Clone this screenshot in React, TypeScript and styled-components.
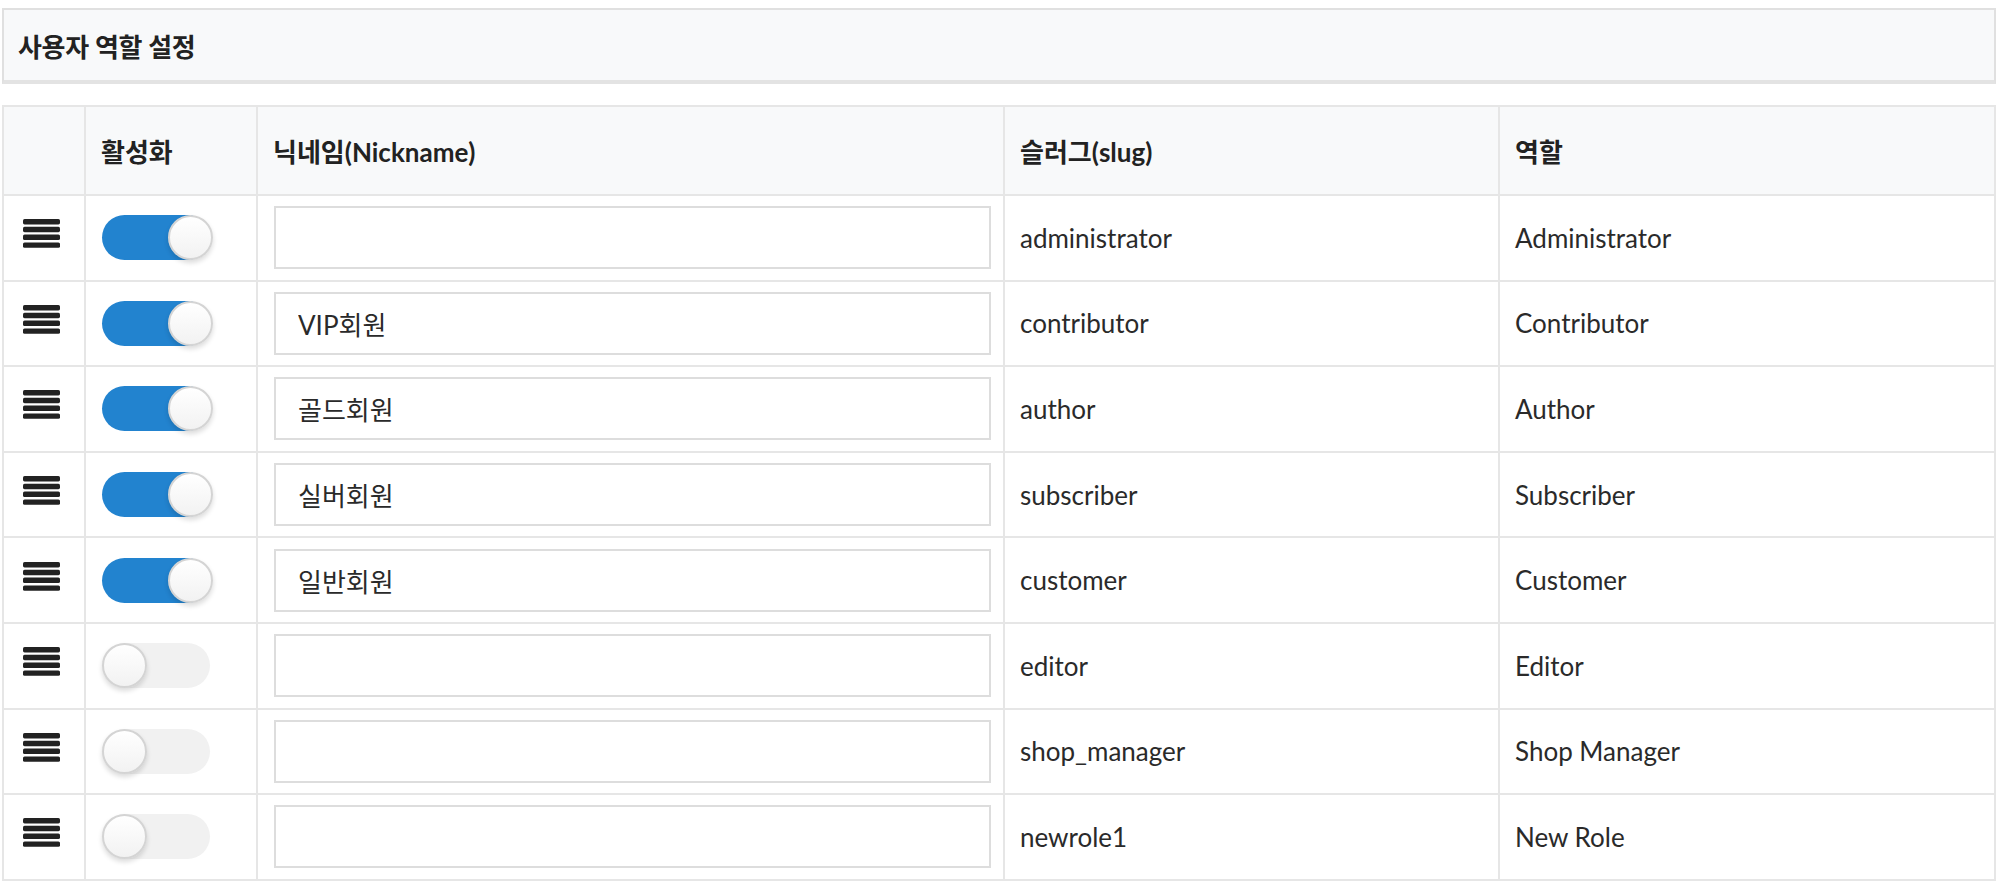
import React from "react";
import styled, { createGlobalStyle } from "styled-components";

const GlobalStyle = createGlobalStyle`
  html, body {
    margin: 0;
    padding: 0;
    background: #ffffff;
  }
  body {
    font-family: Lato, "Noto Sans CJK KR", "Noto Sans", sans-serif;
    color: #2a2a2a;
  }
  * { box-sizing: border-box; }
`;

const Page = styled.div`
  padding: 8px 8px 0 2px;
  width: 2004px;
`;

const TitleBox = styled.div`
  height: 76px;
  display: flex;
  align-items: center;
  padding: 0 14px;
  background: #f8f9fa;
  border: 2px solid #e0e0e0;
  border-bottom-width: 4px;
  border-bottom-color: #e3e3e3;
`;

const Title = styled.h2`
  margin: 0;
  font-size: 26px;
  font-weight: 700;
  color: #222;
  letter-spacing: -0.3px;
`;

const Table = styled.table`
  margin-top: 21px;
  width: 100%;
  border-collapse: collapse;
  table-layout: fixed;
  border: 2px solid #e0e0e0;
`;

const HeadCell = styled.th`
  height: 89px;
  padding: 0 15px;
  text-align: left;
  font-size: 26px;
  font-weight: 700;
  color: #222;
  background: #f8f9fa;
  border: 2px solid #e6e6e6;
  vertical-align: middle;
`;

const Cell = styled.td<{ $pad?: string }>`
  height: 85.6px;
  padding: ${(p) => p.$pad ?? "0 15px"};
  font-size: 26px;
  color: #2a2a2a;
  border: 2px solid #e6e6e6;
  vertical-align: middle;
`;

const Handle = styled.svg`
  display: block;
  width: 37px;
  height: 30px;
  margin-bottom: 7px;
`;

const Track = styled.div<{ $on: boolean }>`
  position: relative;
  width: 108px;
  height: 45px;
  border-radius: 23px;
  background: ${(p) => (p.$on ? "#2283cf" : "#f1f1f1")};
`;

const Knob = styled.div<{ $on: boolean }>`
  position: absolute;
  top: 0;
  left: ${(p) => (p.$on ? "66px" : "0px")};
  width: 45px;
  height: 45px;
  border-radius: 50%;
  background: linear-gradient(#ffffff, #f2f2f2);
  border: 2px solid #d4d4d4;
  box-shadow: 0 3px 5px rgba(0, 0, 0, 0.14);
`;

const NickInput = styled.input`
  display: block;
  width: 100%;
  height: 63px;
  padding: 0 22px;
  font-family: Lato, "Noto Sans CJK KR", "Noto Sans", sans-serif;
  font-size: 26px;
  color: #2a2a2a;
  background: #fff;
  border: 2px solid #dddddd;
  border-radius: 0;
  outline: none;
`;

type Role = { on: boolean; nick: string; slug: string; name: string };

const roles: Role[] = [
  { on: true, nick: "", slug: "administrator", name: "Administrator" },
  { on: true, nick: "VIP회원", slug: "contributor", name: "Contributor" },
  { on: true, nick: "골드회원", slug: "author", name: "Author" },
  { on: true, nick: "실버회원", slug: "subscriber", name: "Subscriber" },
  { on: true, nick: "일반회원", slug: "customer", name: "Customer" },
  { on: false, nick: "", slug: "editor", name: "Editor" },
  { on: false, nick: "", slug: "shop_manager", name: "Shop Manager" },
  { on: false, nick: "", slug: "newrole1", name: "New Role" },
];

const DragIcon = () => (
  <Handle viewBox="0 0 37 30" aria-hidden="true">
    {[0, 1, 2, 3].map((i) => (
      <rect key={i} x="0" y={i * 7.8} width="37" height="5.4" rx="1.6" fill="#222" />
    ))}
  </Handle>
);

const Toggle = ({ on }: { on: boolean }) => (
  <Track $on={on} role="switch" aria-checked={on}>
    <Knob $on={on} />
  </Track>
);

export default function App() {
  return (
    <Page>
      <GlobalStyle />
      <TitleBox>
        <Title>사용자 역할 설정</Title>
      </TitleBox>
      <Table>
        <colgroup>
          <col style={{ width: 82 }} />
          <col style={{ width: 172 }} />
          <col style={{ width: 747 }} />
          <col style={{ width: 495 }} />
          <col />
        </colgroup>
        <thead>
          <tr>
            <HeadCell />
            <HeadCell>활성화</HeadCell>
            <HeadCell>닉네임(Nickname)</HeadCell>
            <HeadCell>슬러그(slug)</HeadCell>
            <HeadCell>역할</HeadCell>
          </tr>
        </thead>
        <tbody>
          {roles.map((r) => (
            <tr key={r.slug}>
              <Cell $pad="0 0 0 19px">
                <DragIcon />
              </Cell>
              <Cell $pad="0 0 0 16px">
                <Toggle on={r.on} />
              </Cell>
              <Cell $pad="0 12px 0 16px">
                <NickInput defaultValue={r.nick} />
              </Cell>
              <Cell>{r.slug}</Cell>
              <Cell>{r.name}</Cell>
            </tr>
          ))}
        </tbody>
      </Table>
    </Page>
  );
}
